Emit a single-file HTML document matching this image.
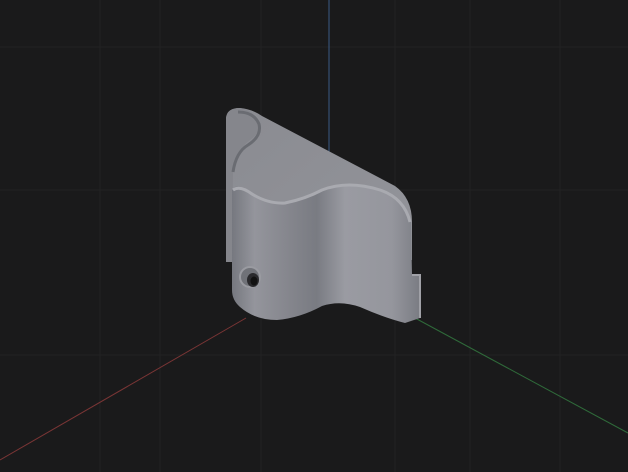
<!DOCTYPE html>
<html><head><style>
html,body{margin:0;padding:0;background:#1a1a1b;}
svg{display:block}
</style></head><body>
<svg width="628" height="472" viewBox="0 0 628 472" xmlns="http://www.w3.org/2000/svg">
<defs>
<linearGradient id="front" x1="0" x2="1" y1="0" y2="0">
<stop offset="0" stop-color="#76787f"/>
<stop offset="0.12" stop-color="#94959c"/>
<stop offset="0.3" stop-color="#85868d"/>
<stop offset="0.45" stop-color="#797b82"/>
<stop offset="0.6" stop-color="#9a9ba2"/>
<stop offset="0.85" stop-color="#95969d"/>
<stop offset="1" stop-color="#7a7c83"/>
</linearGradient>
<linearGradient id="top" x1="0" x2="1" y1="0" y2="1">
<stop offset="0" stop-color="#8a8b91"/>
<stop offset="1" stop-color="#93949a"/>
</linearGradient>
</defs>
<rect width="628" height="472" fill="#1a1a1b"/>
<g stroke="#222223" stroke-width="1">
<line x1="100" y1="0" x2="100" y2="472"/><line x1="160" y1="0" x2="160" y2="472"/>
<line x1="261" y1="0" x2="261" y2="472"/><line x1="395" y1="0" x2="395" y2="472"/>
<line x1="470" y1="0" x2="470" y2="472"/><line x1="560" y1="0" x2="560" y2="472"/>
<line x1="0" y1="47" x2="628" y2="47"/><line x1="0" y1="190" x2="628" y2="190"/>
<line x1="0" y1="355" x2="628" y2="355"/>
</g>
<line x1="329" y1="0" x2="329" y2="185" stroke="#3b5a85" stroke-width="1"/>
<line x1="0" y1="460" x2="246" y2="318" stroke="#7a3535" stroke-width="1"/>
<line x1="415" y1="318" x2="628" y2="433" stroke="#2f6a3a" stroke-width="1"/>
<!-- back plate + top face -->
<path d="M226 262 L226 118 Q227 108 240 108 Q252 109 262 116 L395 186 Q412 198 412 222 L412 260 L232 260 Z" fill="url(#top)"/>
<path d="M226 262 L226 118 Q227 108 240 108 Q252 110 258 120 Q262 132 250 140 Q236 150 233 170 L232 262 Z" fill="#85868c"/>
<path d="M238 112 Q254 112 259 124 Q262 136 248 145 Q236 152 233 172" fill="none" stroke="#6a6c72" stroke-width="3"/>
<!-- front body -->
<path d="M232 190 Q236 182 250 192 Q268 203 285 202 Q305 198 320 190 Q345 180 378 188 Q405 196 411 222 L412 275 L420 275 L420 318 L405 323 Q385 318 360 307 Q340 300 322 306 Q300 318 277 320 Q255 320 240 307 Q232 300 232 290 Z" fill="url(#front)"/>
<path d="M233 190 Q240 185 252 194 Q268 204 285 203 Q305 199 322 190 Q348 180 380 190 Q404 198 410 222" fill="none" stroke="#a9aab0" stroke-width="3"/>
<path d="M412 275 L420 275 L420 318" fill="none" stroke="#a0a1a7" stroke-width="2"/>
<!-- hole -->
<circle cx="250" cy="277" r="11" fill="#9a9ba1"/>
<circle cx="250" cy="277" r="9" fill="#707278"/>
<ellipse cx="253" cy="280" rx="6" ry="7" fill="#2a2a2d"/>
<ellipse cx="254" cy="281" rx="3.5" ry="4.5" fill="#111"/>
</svg>
</body></html>
